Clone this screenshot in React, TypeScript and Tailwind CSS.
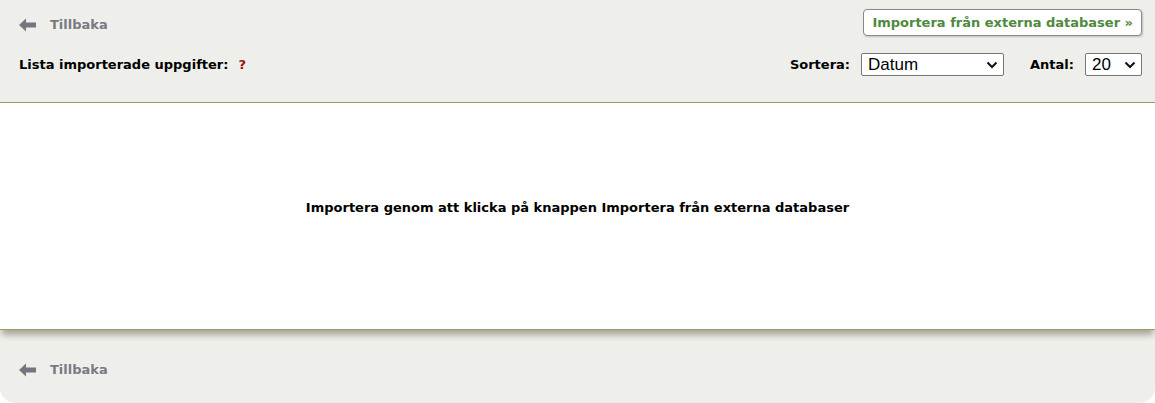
import { FC } from 'react';

const BackArrow: FC = () => (
  <svg width="17" height="14" viewBox="0 0 17 14" className="shrink-0">
    <path d="M0 7 L7 0.5 L7 4.5 L17 4.5 L17 9.5 L7 9.5 L7 13.5 Z" fill="#75757f" />
  </svg>
);

const Chevron: FC = () => (
  <svg width="12" height="8" viewBox="0 0 12 8" className="pointer-events-none absolute right-[6px] top-[8px]">
    <path d="M1.5 1.5 L6 6 L10.5 1.5" fill="none" stroke="#111" strokeWidth="2" />
  </svg>
);

const Back: FC<{ className?: string }> = ({ className = '' }) => (
  <a href="#" className={`flex items-center gap-[14px] text-[13px] font-bold text-[#7a7a86] ${className}`}>
    <BackArrow />
    <span>Tillbaka</span>
  </a>
);

const Select: FC<{ value: string; options: string[]; width: string }> = ({ value, options, width }) => (
  <div className={`relative ${width}`}>
    <select
      defaultValue={value}
      className="h-[23px] w-full appearance-none rounded-[2px] border border-[#767676] bg-white pl-[6px] pr-6 text-[17px] font-normal leading-none text-black [font-family:'Liberation_Sans',Arial,sans-serif]"
    >
      {options.map((o) => (
        <option key={o}>{o}</option>
      ))}
    </select>
    <Chevron />
  </div>
);

export default function App() {
  return (
    <div className="w-[1155px] bg-white [font-family:'DejaVu_Sans',Verdana,sans-serif]">
      <div className="rounded-b-[15px] bg-[#eeefea]">
        <header className="pl-[19px] pr-[13px] pt-[9px] pb-[26px]">
          <div className="flex items-center justify-between">
            <Back className="mt-[4px]" />
            <button className="h-[27px] rounded-[4px] border border-[#8a8a8a] bg-white px-[8px] text-[13px] font-bold text-[#4e8a3e] shadow-[1px_1px_2px_rgba(0,0,0,0.2)]">
              Importera från externa databaser »
            </button>
          </div>
          <div className="mt-[17px] flex items-center justify-between">
            <div className="flex items-center text-[13px] font-bold text-black">
              <span>Lista importerade uppgifter:</span>
              <span className="ml-[10px] text-[#a01010]">?</span>
            </div>
            <div className="flex items-center text-[13px] font-bold text-black">
              <span className="mr-[11px]">Sortera:</span>
              <Select value="Datum" options={['Datum', 'Titel', 'Författare']} width="w-[143px]" />
              <span className="ml-[26px] mr-[11px]">Antal:</span>
              <Select value="20" options={['10', '20', '50', '100']} width="w-[57px]" />
            </div>
          </div>
        </header>
        <main className="relative z-10 h-[228px] border-y border-[#8ba26f] bg-white pt-[95px] text-center text-[13px] font-bold text-black shadow-[0_7px_6px_-2px_rgba(90,80,50,0.45)]">
          Importera genom att klicka på knappen Importera från externa databaser
        </main>
        <footer className="h-[73px] px-[19px] pt-[30px]">
          <Back />
        </footer>
      </div>
    </div>
  );
}
